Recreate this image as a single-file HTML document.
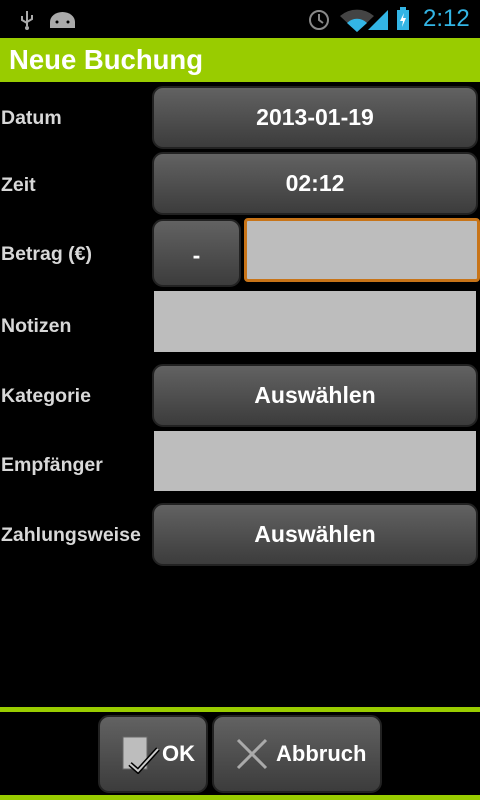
<!DOCTYPE html>
<html><head><meta charset="utf-8"><style>
*{margin:0;padding:0;box-sizing:border-box}
body{width:480px;height:800px;background:#000;position:relative;overflow:hidden;font-family:"Liberation Sans",sans-serif;font-weight:bold}
.a{position:absolute}
.btn{position:absolute;background:linear-gradient(#626262,#3c3c3c);border:2px solid #222;border-radius:11px;color:#fff;font-size:23px;display:flex;align-items:center;justify-content:center}
.lbl{position:absolute;left:1px;color:#d8d8d8;font-size:19.5px}
.box{position:absolute;background:#bdbdbd}
</style></head><body>
<svg class="a" style="left:18px;top:8px" width="60" height="24">
<path d="M9 3v15M4 8v4l5 3M14 7v4l-5 3" stroke="#aaa" stroke-width="2" fill="none"/><circle cx="9" cy="20" r="2" fill="#aaa"/>
<path d="M32 20v-6a10 8 0 0 1 25 0v6z" fill="#aaa"/><circle cx="39" cy="14" r="1.5" fill="#000"/><circle cx="50" cy="14" r="1.5" fill="#000"/>
</svg>
<svg class="a" style="left:306px;top:6px" width="110" height="26">
<circle cx="13" cy="14" r="9" stroke="#888" stroke-width="2" fill="none"/><path d="M13 8v6l4 3" stroke="#888" stroke-width="2" fill="none"/>
<path d="M34 10a26 26 0 0 1 34 0L51 26z" fill="#444"/><path d="M41 17a14 14 0 0 1 20 0L51 26z" fill="#33b5e5"/>
<path d="M62 24L82 4v20z" fill="#33b5e5"/>
<rect x="91" y="4" width="12" height="20" fill="#33b5e5"/><rect x="94" y="1" width="6" height="3" fill="#33b5e5"/><path d="M98 7l-4 8h3l-1 6 4-9h-3z" fill="#fff"/>
</svg>
<div class="a" style="left:423px;top:5px;color:#33b5e5;font-size:24px;font-weight:normal">2:12</div>
<div class="a" style="top:38px;left:0;width:480px;height:44px;background:#99cc00"></div>
<div class="a" style="top:44px;left:9px;color:#fff;font-size:27.5px">Neue Buchung</div>

<div class="lbl" style="top:107px">Datum</div>
<div class="btn" style="left:152px;top:86px;width:326px;height:63px">2013-01-19</div>
<div class="lbl" style="top:174px">Zeit</div>
<div class="btn" style="left:152px;top:152px;width:326px;height:63px">02:12</div>
<div class="lbl" style="top:243px">Betrag (€)</div>
<div class="btn" style="left:152px;top:219px;width:89px;height:68px;padding-top:4px">-</div>
<div class="box" style="left:244px;top:218px;width:236px;height:64px;border:3px solid #c87418;border-radius:4px"></div>
<div class="lbl" style="top:315px">Notizen</div>
<div class="box" style="left:154px;top:291px;width:322px;height:61px"></div>
<div class="lbl" style="top:385px">Kategorie</div>
<div class="btn" style="left:152px;top:364px;width:326px;height:63px">Auswählen</div>
<div class="lbl" style="top:454px">Empfänger</div>
<div class="box" style="left:154px;top:431px;width:322px;height:60px"></div>
<div class="lbl" style="top:524px">Zahlungsweise</div>
<div class="btn" style="left:152px;top:503px;width:326px;height:63px">Auswählen</div>

<div class="a" style="top:707px;left:0;width:480px;height:5px;background:#99cc00"></div>
<div class="btn" style="left:98px;top:715px;width:110px;height:78px;justify-content:flex-start;padding-left:20px;font-size:22px">
<svg width="42" height="40" style="margin-right:0"><rect x="3" y="3" width="24" height="32" fill="#bdbdbd" stroke="#666"/><path d="M10 30l8 7 20-22" stroke="#000" stroke-width="5" fill="none"/><path d="M10 30l8 7 20-22" stroke="#ccc" stroke-width="2" fill="none"/></svg>OK</div>
<div class="btn" style="left:212px;top:715px;width:170px;height:78px;justify-content:flex-start;padding-left:22px;font-size:22px">
<svg width="32" height="32" style="margin-right:8px"><path d="M2 2l28 28M30 2L2 30" stroke="#aaa" stroke-width="3"/></svg>Abbruch</div>
<div class="a" style="top:795px;left:0;width:480px;height:5px;background:#99cc00"></div>
</body></html>
